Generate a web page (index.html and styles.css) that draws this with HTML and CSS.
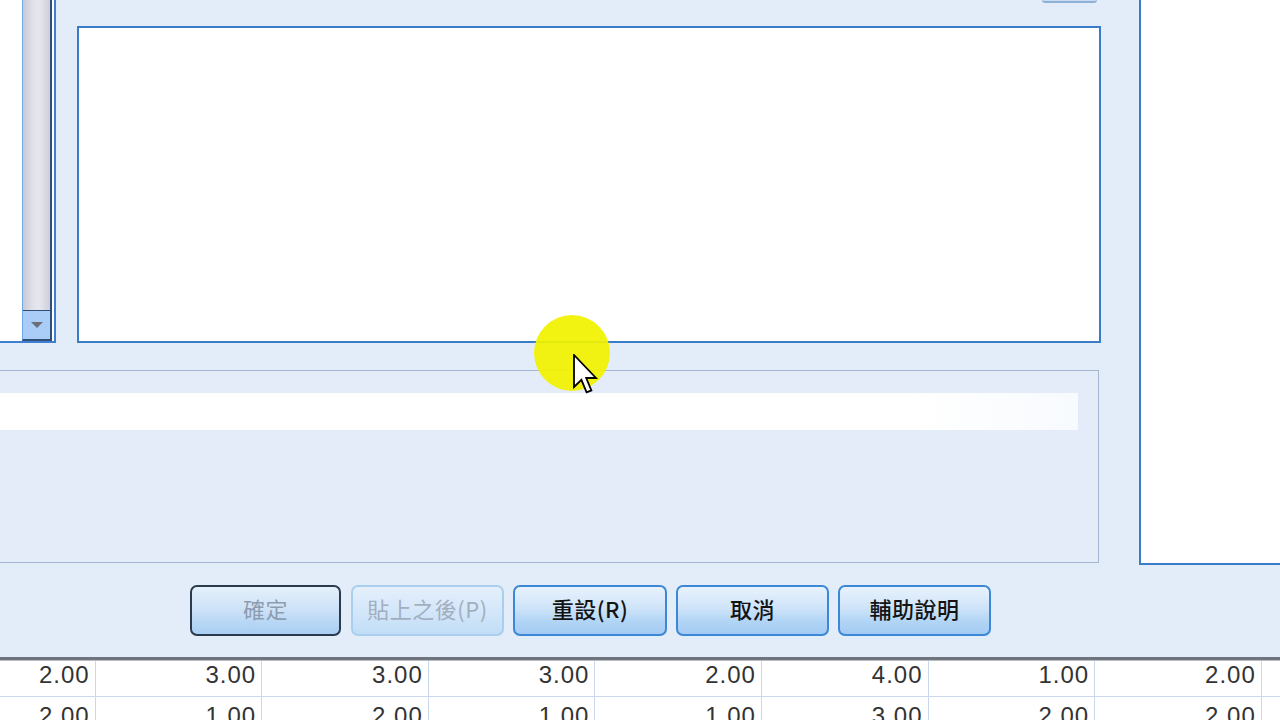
FILE: index.html
```html
<!DOCTYPE html>
<html lang="zh-Hant">
<head>
<meta charset="utf-8">
<title>SPSS 對話框</title>
<link rel="stylesheet" href="styles.css">
</head>
<body>
<div class="screen">
  <div class="dialog">
    <div class="upper">
      <div class="main">
        <div class="top-row">
          <div class="listbox">
            <div class="list-content"></div>
            <div class="scrollbar">
              <div class="track"></div>
              <div class="scroll-down"><span class="tri"></span></div>
            </div>
          </div>
          <div class="text-col">
            <div class="mini-bar"><div class="mini-btn"></div></div>
            <div class="textbox"></div>
          </div>
        </div>
        <div class="groupbox">
          <div class="strip"></div>
        </div>
      </div>
      <div class="side"></div>
    </div>
    <div class="buttons">
      <button class="btn default disabled">確定</button>
      <button class="btn disabled light">貼上之後(P)</button>
      <button class="btn wide">重設(R)</button>
      <button class="btn">取消</button>
      <button class="btn">輔助說明</button>
    </div>
  </div>
  <div class="grid">
    <div class="row first">
      <div class="cell">2.00</div><div class="cell">3.00</div><div class="cell">3.00</div><div class="cell">3.00</div><div class="cell">2.00</div><div class="cell">4.00</div><div class="cell">1.00</div><div class="cell">2.00</div><div class="cell"></div>
    </div>
    <div class="row">
      <div class="cell">2.00</div><div class="cell">1.00</div><div class="cell">2.00</div><div class="cell">1.00</div><div class="cell">1.00</div><div class="cell">3.00</div><div class="cell">2.00</div><div class="cell">2.00</div><div class="cell"></div>
    </div>
  </div>
  <div class="highlight"></div>
  <svg class="cursor" width="26" height="44" viewBox="0 0 13 22">
    <path d="M0.5 0.5 L0.5 16.5 L4.2 12.9 L6.8 19.2 L9.2 18.2 L6.6 12 L11.5 12 Z" fill="#ffffff" stroke="#000000" stroke-width="0.9" stroke-linejoin="miter"/>
  </svg>
</div>
</body>
</html>
```

FILE: styles.css
```css
* { box-sizing: border-box; }
html, body { margin: 0; padding: 0; }
body {
  width: 1280px;
  height: 720px;
  overflow: hidden;
  background: #ffffff;
  font-family: "Noto Sans CJK TC", "Liberation Sans", sans-serif;
}
.screen {
  position: relative;
  width: 1280px;
  height: 720px;
  overflow: hidden;
}
.dialog {
  background: #e3edf9;
  height: 660px;
  border-bottom: 3px solid #6f747c;
  box-shadow: 0 1px 0 #b9bec6;
}
.upper { display: flex; height: 565px; }
.main { width: 1139px; }
.top-row { display: flex; height: 343px; }
.listbox {
  width: 56px;
  height: 343px;
  display: flex;
  background: #ffffff;
  border-right: 2px solid #3f7fcf;
  border-bottom: 2px solid #3f7fcf;
}
.list-content { width: 22px; }
.scrollbar {
  width: 30px;
  display: flex;
  flex-direction: column;
  border-left: 1px solid #6ea6e6;
  border-right: 2px solid #2f4e78;
  border-bottom: 2px solid #2f4e78;
  margin-right: 2px;
  background: #e3edf9;
}
.track {
  flex: 1;
  background: linear-gradient(90deg, #c9c9d6 0%, #e3e3ec 40%, #e6e6ee 60%, #cfcfdc 100%);
}
.scroll-down {
  height: 29px;
  background: #a9cdf6;
  border-top: 1px solid #2f4e78;
  display: flex;
  align-items: center;
  justify-content: center;
}
.tri {
  width: 0;
  height: 0;
  border-left: 6px solid transparent;
  border-right: 6px solid transparent;
  border-top: 6px solid #6b6f78;
}
.text-col {
  margin-left: 21px;
  width: 1024px;
  display: flex;
  flex-direction: column;
}
.mini-bar { display: flex; justify-content: flex-end; padding-right: 4px; }
.mini-btn {
  width: 55px;
  height: 3px;
  background: #c9dcf2;
  border-bottom: 2px solid #8fb0d6;
  border-radius: 0 0 3px 3px;
}
.textbox {
  margin-top: 23px;
  height: 317px;
  background: #ffffff;
  border: 2px solid #3b7cc8;
}
.groupbox {
  margin-top: 27px;
  width: 1099px;
  height: 193px;
  border: 1px solid #a3b8d0;
  border-left: none;
  padding-top: 22px;
  background: #e4ecf9;
}
.strip {
  width: 1078px;
  height: 37px;
  background: linear-gradient(90deg, #ffffff 0%, #ffffff 85%, #f7fafe 100%);
}
.side {
  flex: 1;
  height: 565px;
  background: #ffffff;
  border-left: 2px solid #3b7cc8;
  border-bottom: 2px solid #3b7cc8;
}
.buttons {
  display: flex;
  gap: 9px;
  padding-left: 190px;
  margin-top: 20px;
}
.btn {
  width: 153px;
  height: 51px;
  border: 2px solid #3c88d6;
  border-radius: 7px;
  background: linear-gradient(180deg, #e8f2fd 0%, #cfe4f9 45%, #b4d6f6 70%, #a3cbf2 100%);
  font-family: "Noto Sans CJK TC", sans-serif;
  font-size: 22px;
  font-weight: 500;
  color: #141414;
  padding: 0 0 5px 0;
  display: flex;
  align-items: center;
  justify-content: center;
  letter-spacing: 0.5px;
}
.btn.default {
  width: 151px;
  margin-right: 1px;
  border-color: #2c3a4d;
  background: linear-gradient(180deg, #e4effb 0%, #cfe3f8 45%, #b8d7f5 75%, #a9cff3 100%);
}
.btn.wide { width: 154px; }
.btn.disabled { color: #8e9cb0; font-weight: 400; }
.btn.light {
  border-color: #aacfee;
  background: linear-gradient(180deg, #e4effb 0%, #d4e7fa 50%, #c1ddf6 100%);
  color: #a3aebe;
}
.grid {
  margin-left: -71px;
  margin-top: 1px;
  font-family: "Liberation Sans", sans-serif;
  font-size: 24px;
  line-height: 24px;
  color: #333333;
}
.row {
  display: flex;
  height: 43px;
  border-bottom: 1px solid #c9d8ea;
}
.row.first { height: 36px; }
.cell {
  width: 166.6px;
  flex: none;
  text-align: right;
  padding-right: 5px;
  letter-spacing: 1px;
  border-right: 1px solid #c9d8ea;
  padding-top: 7px;
}
.row.first .cell { padding-top: 2px; }
.highlight {
  position: absolute;
  left: 534px;
  top: 315px;
  width: 76px;
  height: 76px;
  border-radius: 50%;
  background: #f2f200;
  opacity: 0.93;
}
.cursor {
  position: absolute;
  left: 573px;
  top: 354px;
}
```
